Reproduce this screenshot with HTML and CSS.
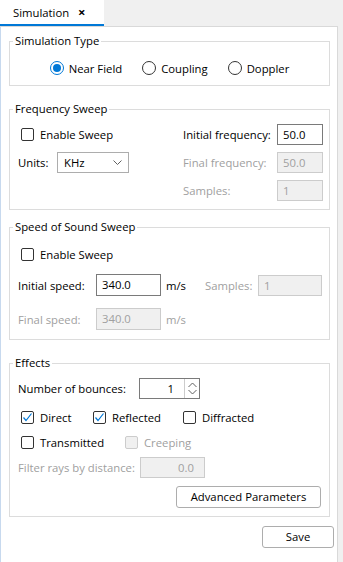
FILE: index.html
```html
<!DOCTYPE html>
<html>

	<head>
		<meta charset="UTF-8">
		<title>Simulation</title>
		<link rel="stylesheet" href="styles.css">
	</head>

	<body>
		<div class="tabs">
			<div class="tab">Simulation <span class="close">×</span></div>
		</div>
		<div class="panel">
			<fieldset class="group">
				<legend>Simulation Type</legend>
				<div class="body type-body">
					<div class="radios">
						<span class="radio"><span class="circle on"></span>Near Field</span>
						<span class="radio"><span class="circle"></span>Coupling</span>
						<span class="radio"><span class="circle"></span>Doppler</span>
					</div>
				</div>
			</fieldset>

			<fieldset class="group freq">
				<legend>Frequency Sweep</legend>
				<div class="body freq-body">
					<div class="cell"><span class="check"><span class="box"></span>Enable Sweep</span></div>
					<div class="cell">Initial frequency:</div>
					<div class="field">50.0</div>
					<div class="cell">
						<span class="lab units">Units:</span>
						<div class="combo">KHz
							<svg width="9" height="5" viewBox="0 0 9 5"><polyline points="0.5,0.5 4.5,4.5 8.5,0.5" fill="none" stroke="#606060" stroke-width="1" /></svg>
						</div>
					</div>
					<div class="cell off">Final frequency:</div>
					<div class="field dis">50.0</div>
					<div class="cell"></div>
					<div class="cell off">Samples:</div>
					<div class="field dis">1</div>
				</div>
			</fieldset>

			<fieldset class="group speed">
				<legend>Speed of Sound Sweep</legend>
				<div class="body speed-body">
					<div class="row r-check"><span class="check"><span class="box"></span>Enable Sweep</span></div>
					<div class="row r-init">
						<span class="lab speed-lab">Initial speed:</span>
						<div class="field w65">340.0</div>
						<span class="unit">m/s</span>
						<span class="lab off samples-lab">Samples:</span>
						<div class="field dis w64">1</div>
					</div>
					<div class="row r-final">
						<span class="lab off speed-lab">Final speed:</span>
						<div class="field dis w65">340.0</div>
						<span class="unit off">m/s</span>
					</div>
				</div>
			</fieldset>

			<fieldset class="group effects">
				<legend>Effects</legend>
				<div class="body effects-body">
					<div class="row r-bounces">
						<span class="lab bounces-lab">Number of bounces:</span>
						<div class="spin">
							<span class="spin-val">1</span>
							<span class="spin-btn">
								<svg width="9" height="13" viewBox="0 0 9 13"><polyline points="0.5,5 4.5,1 8.5,5" fill="none" stroke="#606060" stroke-width="1" /><polyline points="0.5,8 4.5,12 8.5,8" fill="none" stroke="#606060" stroke-width="1" /></svg>
							</span>
						</div>
					</div>
					<div class="row r-opts">
						<span class="check w72"><span class="box ticked"><svg width="11" height="11" viewBox="0 0 11 11"><polyline points="1.5,5.5 4,8.5 9.5,1.5" fill="none" stroke="#0078d7" stroke-width="1.2" /></svg></span>Direct</span>
						<span class="check w90"><span class="box ticked"><svg width="11" height="11" viewBox="0 0 11 11"><polyline points="1.5,5.5 4,8.5 9.5,1.5" fill="none" stroke="#0078d7" stroke-width="1.2" /></svg></span>Reflected</span>
						<span class="check"><span class="box"></span>Diffracted</span>
					</div>
					<div class="row r-opts2">
						<span class="check w104"><span class="box"></span>Transmitted</span>
						<span class="check off"><span class="box dis"></span>Creeping</span>
					</div>
					<div class="row r-filter">
						<span class="lab off filter-lab">Filter rays by distance:</span>
						<div class="field dis w65 right">0.0</div>
					</div>
					<div class="row r-adv">
						<div class="button adv">Advanced Parameters</div>
					</div>
				</div>
			</fieldset>

			<div class="footer">
				<div class="button save">Save</div>
			</div>
		</div>
	</body>

</html>
```

FILE: styles.css
```css
* {
	padding: 0;
	margin: 0;
	box-sizing: border-box;
}

body {
	width: 343px;
	height: 562px;
	overflow: hidden;
	background: #f0f0f0;
	font-family: "Open Sans", "Noto Sans", sans-serif;
	font-size: 11.3px;
	color: #000;
}

.tabs {
	height: 27px;
	width: 338px;
	border-bottom: 1px solid #d9d9d9;
	display: flex;
}

.tab {
	width: 104px;
	height: 26px;
	background: #fff;
	border-bottom: 2px solid #0078d7;
	padding-left: 13px;
	line-height: 24px;
}

.close {
	margin-left: 6px;
	font-weight: bold;
	font-size: 13px;
}

.panel {
	width: 338px;
	height: 535px;
	background: #fff;
	border-left: 1px solid #c7d9ee;
	border-right: 1px solid #d9d9d9;
	padding: 6px 7px 0 8px;
}

.group {
	border: 1px solid #dcdcdc;
	min-width: 0;
}

.group legend {
	margin-left: 3px;
	padding: 0 2px;
	line-height: 16px;
}

.freq,
.effects {
	margin-top: 15px;
}

.speed {
	margin-top: 9px;
}

.body {
	padding-left: 8px;
}

.off {
	color: #a0a0a0;
}

/* simulation type */
.type-body {
	padding: 9px 0 7px;
}

.radios {
	height: 20px;
	display: flex;
	justify-content: center;
	align-items: center;
	gap: 20px;
}

.radio {
	display: flex;
	align-items: center;
}

.circle {
	width: 14px;
	height: 14px;
	border: 1px solid #333;
	border-radius: 50%;
	margin-right: 5px;
	display: flex;
	align-items: center;
	justify-content: center;
}

.circle.on {
	border-color: #0078d7;
}

.circle.on::after {
	content: "";
	width: 8px;
	height: 8px;
	border-radius: 50%;
	background: #0078d7;
}

/* checkbox */
.check {
	display: flex;
	align-items: center;
	height: 20px;
}

.box {
	width: 13px;
	height: 13px;
	border: 1px solid #333;
	border-radius: 2px;
	margin-left: 3px;
	margin-right: 6px;
	display: flex;
	align-items: center;
	justify-content: center;
	background: #fff;
}

.box.dis {
	border-color: #cccccc;
	background: #f0f0f0;
}

.w72 {
	width: 72px;
}

.w90 {
	width: 90px;
}

.w104 {
	width: 104px;
}

/* fields */
.field {
	height: 21px;
	border: 1px solid #7a7a7a;
	padding-left: 5px;
	line-height: 19px;
	background: #fff;
}

.field.dis {
	border-color: #cccccc;
	background: #f0f0f0;
	color: #a0a0a0;
}

.field.right {
	text-align: right;
	padding-right: 10px;
}

.w65 {
	width: 65px;
}

.w64 {
	width: 64px;
}

/* frequency sweep */
.freq-body {
	padding: 7px 7px 8px 8px;
	display: grid;
	grid-template-columns: 165px 94px 46px;
	grid-auto-rows: 21px;
	row-gap: 7px;
}

.cell {
	display: flex;
	align-items: center;
}

.lab {
	display: inline-block;
	flex-shrink: 0;
}

.units {
	width: 39px;
}

.combo {
	width: 72px;
	height: 21px;
	border: 1px solid #adadad;
	padding: 0 6px;
	display: flex;
	align-items: center;
	justify-content: space-between;
}

/* speed sweep */
.speed-body {
	padding-top: 9px;
	padding-bottom: 9px;
}

.row {
	display: flex;
	align-items: center;
}

.r-init {
	margin-top: 10px;
	height: 22px;
}

.r-final {
	margin-top: 12px;
	height: 22px;
}

.r-init .field,
.r-final .field {
	height: 22px;
	line-height: 20px;
}

.r-init .w64 {
	height: 21px;
	line-height: 19px;
}

.speed-lab {
	width: 78px;
}

.unit {
	width: 44px;
	padding-left: 5px;
}

.samples-lab {
	width: 53px;
}

/* effects */
.effects-body {
	padding: 7px 8px 8px 8px;
}

.r-bounces {
	height: 21px;
}

.bounces-lab {
	width: 121px;
}

.spin {
	width: 61px;
	height: 21px;
	border: 1px solid #7a7a7a;
	display: flex;
}

.spin-val {
	flex: 1;
	text-align: right;
	padding-right: 10px;
	line-height: 19px;
}

.spin-btn {
	width: 15px;
	border-left: 1px solid #cccccc;
	display: flex;
	align-items: center;
	justify-content: center;
}

.r-opts {
	margin-top: 8px;
}

.r-opts2,
.r-filter {
	margin-top: 5px;
}

.r-filter {
	height: 21px;
}

.filter-lab {
	width: 122px;
}

.r-adv {
	margin-top: 8px;
	justify-content: flex-end;
}

.button {
	height: 22px;
	border: 1px solid #adadad;
	border-radius: 3px;
	background: #fff;
	text-align: center;
	line-height: 20px;
}

.adv {
	width: 145px;
}

.footer {
	margin-top: 9px;
	margin-right: -4px;
	display: flex;
	justify-content: flex-end;
}

.save {
	width: 72px;
}
```
